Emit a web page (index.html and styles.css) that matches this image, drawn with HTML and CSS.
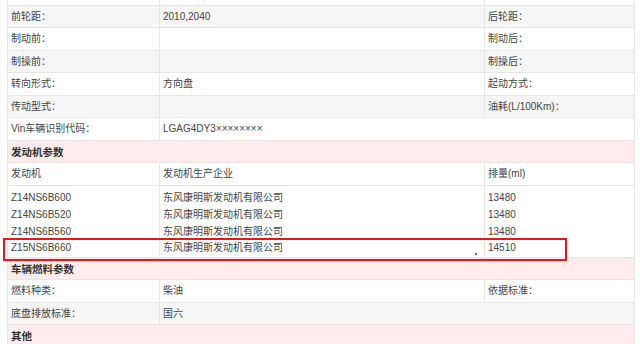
FILE: index.html
```html
<!DOCTYPE html>
<html lang="zh">
<head>
<meta charset="utf-8">
<link rel="stylesheet" href="styles.css">
</head>
<body>
<div class="page">
  <table class="spec">
    <colgroup><col class="c1"><col class="c2"><col class="c3"></colgroup>
    <tr class="r22 w"><td></td><td></td><td></td></tr>
    <tr class="r22 g"><td>前轮距：</td><td>2010,2040</td><td>后轮距：</td></tr>
    <tr class="r23 w"><td>制动前：</td><td></td><td>制动后：</td></tr>
    <tr class="r22 g"><td>制操前：</td><td></td><td>制操后：</td></tr>
    <tr class="r23 w"><td>转向形式：</td><td>方向盘</td><td>起动方式：</td></tr>
    <tr class="r22 g"><td>传动型式：</td><td></td><td>油耗(L/100Km)：</td></tr>
    <tr class="r23 w"><td>Vin车辆识别代码：</td><td colspan="2">LGAG4DY3××××××××</td></tr>
    <tr class="r22 sec"><td colspan="3">发动机参数</td></tr>
    <tr class="r23 w"><td>发动机</td><td>发动机生产企业</td><td>排量(ml)</td></tr>
    <tr class="multi w">
      <td><div>Z14NS6B600</div><div>Z14NS6B520</div><div>Z14NS6B560</div><div>Z15NS6B660</div></td>
      <td><div>东风康明斯发动机有限公司</div><div>东风康明斯发动机有限公司</div><div>东风康明斯发动机有限公司</div><div>东风康明斯发动机有限公司</div></td>
      <td><div>13480</div><div>13480</div><div>13480</div><div>14510</div></td>
    </tr>
    <tr class="r22 sec"><td colspan="3">车辆燃料参数</td></tr>
    <tr class="r23 w"><td>燃料种类：</td><td>柴油</td><td>依据标准：</td></tr>
    <tr class="r22 g"><td>底盘排放标准：</td><td colspan="2">国六</td></tr>
    <tr class="r23 sec"><td colspan="3">其他</td></tr>
  </table>
  <div class="mark"></div>
  <div class="dot"></div>
</div>
</body>
</html>
```
FILE: styles.css
```css
html, body {
  margin: 0;
  padding: 0;
  background: #ffffff;
}
body {
  width: 640px;
  height: 344px;
  overflow: hidden;
  font-family: "Liberation Sans", "Noto Sans CJK SC", sans-serif;
  font-size: 10px;
  color: #444444;
}
.page {
  position: relative;
  display: flow-root;
  padding: 0 6px 0 7px;
}
.spec {
  width: 627px;
  margin-top: -17px;
  border-collapse: collapse;
  table-layout: fixed;
  border: 1px solid #e4e4e4;
}
.c1 { width: 152px; }
.c2 { width: 325px; }
.c3 { width: 150px; }
.spec td {
  border: 1px solid #e6e6e6;
  padding: 0 3px;
  vertical-align: middle;
  white-space: nowrap;
  line-height: 14px;
}
.r22 td { height: 21px; }
.r23 td { height: 22px; }
.g td { background: #f6f6f6; }
.w td { background: #ffffff; }
.sec td {
  background: #fdeceb;
  font-size: 10.5px;
  font-weight: bold;
  color: #333333;
}
.multi td {
  height: 68px;
  vertical-align: top;
  padding-top: 3px;
}
.multi td div {
  height: 17px;
  line-height: 17px;
}
.multi td div:last-child {
  height: 16px;
  line-height: 16px;
}
.mark {
  position: absolute;
  left: 3px;
  top: 238px;
  width: 560px;
  height: 19px;
  border: 2px solid #e3171d;
}
.dot {
  position: absolute;
  left: 475px;
  top: 253px;
  width: 2px;
  height: 2px;
  background: #d04040;
}
```
